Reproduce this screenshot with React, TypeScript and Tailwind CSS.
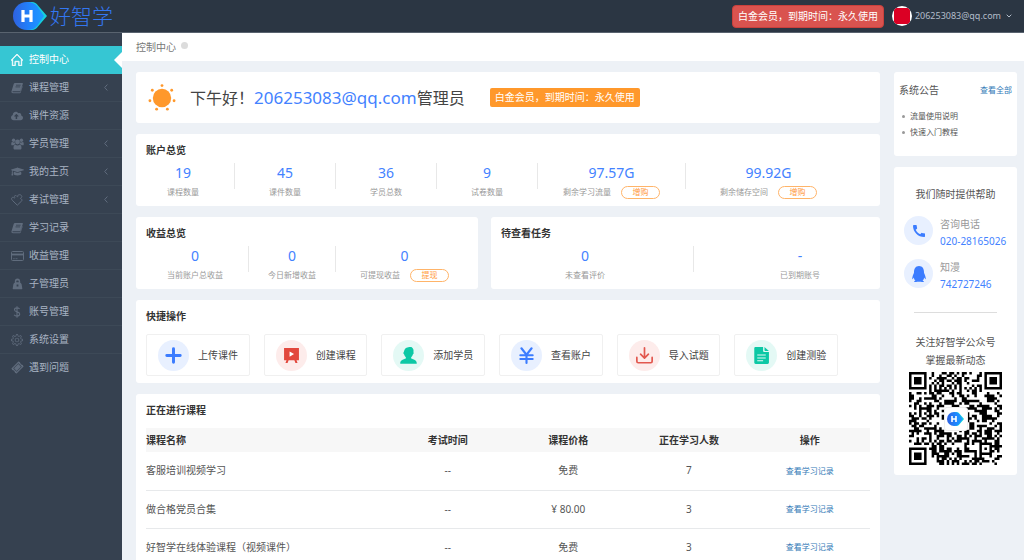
import React from 'react';
import { FaCloudUploadAlt, FaGraduationCap, FaTicketAlt, FaQq } from 'react-icons/fa';
import { SlHome, SlSettings } from 'react-icons/sl';
import { MdCall } from 'react-icons/md';

const BookIcon = () => (
  <svg width="12" height="12" viewBox="0 0 12 12" fill="currentColor">
    <path d="M4 1h7.2c.5 0 .8.4.6.9L9.6 8.600c-.1.400-.4.600-.8.600H2.200c-.6 0-.9.300-.7.700.1.300.4.400.8.400h6.900L11.300 4l.4.500-2 6c-.1.500-.5.800-1 .8H2C.9 11.300.2 10.300.5 9.300L2.700 2C2.900 1.400 3.400 1 4 1z" />
    <path d="M5 3.200h4.600M4.500 4.900h4.600" stroke="#364150" strokeWidth=".8" fill="none" />
  </svg>
);

const UsersIcon = () => (
  <svg width="13" height="12" viewBox="0 0 13 12" fill="currentColor">
    <circle cx="2.600" cy="2.300" r="1.700" />
    <circle cx="10.400" cy="2.300" r="1.700" />
    <circle cx="6.500" cy="4" r="2.400" />
    <path d="M.300 7V5.600c0-1 .3-1.500 1-1.500.5.400 1.700.6 2.500.2.100.9.400 1.500.9 2-.9 0-1.600.2-2.100.9H1.200C.700 7.200.300 7.200.300 7zM12.700 7V5.600c0-1-.3-1.500-1-1.500-.5.400-1.700.6-2.500.2-.1.900-.4 1.500-.9 2 .9 0 1.600.2 2.100.9h1.400c.5 0 .9 0 .9-.2z" />
    <path d="M2.500 10c0-2 .4-3.300 1.900-3.300.6.500 1.300.8 2.100.8s1.500-.3 2.100-.8c1.500 0 1.900 1.300 1.900 3.300 0 1-.6 1.500-1.500 1.500H4c-.9 0-1.500-.5-1.500-1.500z" />
  </svg>
);

const PuzzleIcon = () => (
  <svg width="12" height="12" viewBox="0 0 12 12" fill="none" stroke="currentColor" strokeLinejoin="round">
    <path d="M6.300 11.200L1.300 6.300C.300 5.300.400 4 1.200 3.500c.7-.4 1.300 0 1.900.5.500.3.900-.2.600-.7C3.200 2.500 3.300 1.900 4 1.600c.8-.3 1.500.2 2 .8.500.500 1 .200.900-.4C6.700 1 7.600.6 8.500.7c1.300 0 2 .7 2.300 1.600.2.800-.3 1.400-1 1.700-.6.200-.5.700.1.900 1.200.4 1.500 1.200.9 1.900z" />
  </svg>
);

const CardIcon = () => (
  <svg width="13" height="12" viewBox="0 0 13 12" fill="none" stroke="currentColor">
    <rect x=".5" y="1.500" width="12" height="9" rx="1" />
    <path d="M1 4.500h11" strokeWidth="1.800" />
    <path d="M2.200 8.700h1.500M4.500 8.700h2" strokeWidth=".8" />
  </svg>
);

const LockIcon = () => (
  <svg width="11" height="12" viewBox="0 0 11 12" fill="currentColor">
    <path d="M5.500.500c1.700 0 2.700 1.200 2.700 2.900v1.400c.9.300 1.300 1 1.500 2l.6 3.600c.1.500-.1.800-.6.800H1.300c-.5 0-.7-.3-.6-.8l.6-3.600c.2-1 .6-1.700 1.500-2V3.400C2.800 1.700 3.800.5 5.500.5z" />
    <path d="M4.300 4.300V3.500c0-.6.4-1 1.200-1s1.200.4 1.200 1v.8zM4.600 6.600h1.800v2H4.600z" fill="#364150" />
  </svg>
);

const DollarIcon = () => (
  <svg width="8" height="12" viewBox="0 0 8 12" fill="none" stroke="currentColor" strokeWidth="1.100">
    <path d="M4 .300v11.400M6.600 3C6 2.300 5.100 1.900 4 1.900c-1.500 0-2.500.7-2.500 1.900C1.500 6.600 6.700 5.200 6.700 8.100c0 1.300-1.100 2-2.700 2-1.200 0-2.200-.4-2.900-1.200" />
  </svg>
);

const menu = [
  { name: '控制中心', icon: <SlHome size={12} strokeWidth={40} />, active: true },
  { name: '课程管理', icon: <BookIcon />, sub: true },
  { name: '课件资源', icon: <FaCloudUploadAlt size={12} /> },
  { name: '学员管理', icon: <UsersIcon />, sub: true },
  { name: '我的主页', icon: <FaGraduationCap size={13} />, sub: true },
  { name: '考试管理', icon: <PuzzleIcon />, sub: true },
  { name: '学习记录', icon: <BookIcon /> },
  { name: '收益管理', icon: <CardIcon /> },
  { name: '子管理员', icon: <LockIcon /> },
  { name: '账号管理', icon: <DollarIcon /> },
  { name: '系统设置', icon: <SlSettings size={12} /> },
  { name: '遇到问题', icon: <FaTicketAlt size={11} className="-rotate-45" /> },
];

const courses = [
  { name: '客服培训视频学习', time: '--', price: '免费', count: 7 },
  { name: '做合格党员合集', time: '--', price: '¥ 80.00', count: 3 },
  { name: '好智学在线体验课程（视频课件）', time: '--', price: '免费', count: 3 },
];

const actions = [
  {
    name: '上传课件',
    color: 'bg-[#e8f0ff] text-[#3b7cff]',
    icon: <path d="M8 1.700v12.600M1.700 8h12.600" stroke="currentColor" strokeWidth="2.800" strokeLinecap="round" />,
  },
  {
    name: '创建课程',
    color: 'bg-[#fdeceb] text-[#e2483d]',
    icon: (
      <>
        <path d="M1 1h14v11.500h-2.300l1 2.500h-2l-1-2.500H5.300l-1 2.500h-2l1-2.500H1z" fill="currentColor" />
        <path d="M6.200 4.200l4.200 2.500-4.200 2.500z" fill="#fff" />
      </>
    ),
  },
  {
    name: '添加学员',
    color: 'bg-[#e4f9f5] text-[#0cc8a5]',
    icon: (
      <path
        d="M4 3.200C4.600.9 6.400.2 8.100.2c.8-.5 2.300-.6 3.200.2 1.300.9 1.700 2.700 1.300 4.500.5.300.3 1.500-.4 1.900-.4 1.200-.9 2.100-1.700 2.800v1.200c2.300.9 5 1.300 5.300 4.200.1.500-.2.700-.7.700H.900c-.5 0-.8-.2-.7-.7.400-2.900 3-3.300 5.300-4.200V9.600C4.700 8.900 4.200 8 3.800 6.800c-.7-.4-.9-1.600-.3-1.900z"
        fill="currentColor"
      />
    ),
  },
  {
    name: '查看账户',
    color: 'bg-[#e8f0ff] text-[#3b7cff]',
    icon: <path d="M3.200 1.200L8 7.300l4.800-6.100M8 7.300v7.700M2.200 7.800h11.600M2.200 11.300h11.600" stroke="currentColor" strokeWidth="2" strokeLinecap="round" fill="none" />,
  },
  {
    name: '导入试题',
    color: 'bg-[#fdeceb] text-[#e2574e]',
    icon: <path d="M8 .8v9.400M4.300 6.800L8 10.400l3.700-3.600M.8 9.800v3.700c0 .8.500 1.300 1.300 1.300h11.800c.8 0 1.300-.5 1.300-1.300V9.800" stroke="currentColor" strokeWidth="1.600" strokeLinecap="round" strokeLinejoin="round" fill="none" />,
  },
  {
    name: '创建测验',
    color: 'bg-[#e4f9f5] text-[#0cc8a5]',
    icon: (
      <>
        <path d="M2.500 0H9.500v3.500c0 .7.500 1.200 1.200 1.200H15v10c0 .8-.5 1.300-1.300 1.300H2.500c-.8 0-1.300-.5-1.300-1.300V1.300C1.200.5 1.700 0 2.500 0z" fill="currentColor" />
        <path d="M10.800 0L15 3.700h-3.400c-.5 0-.8-.3-.8-.8z" fill="currentColor" />
        <path d="M4 7.500h8M4 10.300h8M4 13h5.500" stroke="#e4f9f5" strokeWidth="1" />
      </>
    ),
  },
];

// builds a 37x37 code as one path
const QR_SIZE = 37;
const finder = (x: number, y: number) => {
  const d = Math.max(Math.abs(x - 3), Math.abs(y - 3));
  return d <= 1 || d === 3;
};
const isDark = (x: number, y: number) => {
  const far = QR_SIZE - 8;
  if (x < 8 && y < 8) return x < 7 && y < 7 && finder(x, y);
  if (x >= far && y < 8) return x > far && y < 7 && finder(x - far - 1, y);
  if (x < 8 && y >= far) return x < 7 && y > far && finder(x, y - far - 1);
  const a = Math.max(Math.abs(x - 30), Math.abs(y - 30));
  if (a <= 2) return a !== 1;
  if (x === 6 || y === 6) return (x + y) % 2 === 0;
  let h = (x * 374761393 + y * 668265263) | 0;
  h = Math.imul(h ^ (h >>> 13), 1274126177);
  return ((h ^ (h >>> 16)) & 255) < 128;
};
let qrPath = '';
for (let y = 0; y < QR_SIZE; y++) {
  for (let x = 0; x < QR_SIZE; x++) {
    if (isDark(x, y)) qrPath += `M${x} ${y}h1v1h-1z`;
  }
}

const LogoMark = ({ className }: { className: string }) => (
  <svg className={className} viewBox="0 0 34 28">
    <defs>
      <linearGradient id="mark" x1="0" x2="1">
        <stop offset="0" stopColor="#2f62e0" />
        <stop offset=".6" stopColor="#1f86ff" />
        <stop offset="1" stopColor="#1c9cff" />
      </linearGradient>
    </defs>
    <path d="M14 0h5c2.500 0 4.500 1.500 6 3.500L34 14l-9 10.500c-1.500 2-3.500 3.500-6 3.500h-5z" fill="#16cfdd" />
    <path d="M14 0c5 0 8 1.500 10.500 4.500L31 14l-6.500 9.500C22 26.500 19 28 14 28A14 14 0 0 1 14 0z" fill="url(#mark)" />
    <path d="M10 8v12M18 8v12M10 14h8" stroke="#fff" strokeWidth="3.200" fill="none" />
  </svg>
);

const Sun = () => (
  <svg width="28" height="28" viewBox="0 0 28 28" fill="#ff982b" className="shrink-0">
    <circle cx="14" cy="14" r="9.200" />
    {[0, 1, 2, 3, 4, 5, 6].map((i) => {
      const a = (i * 2 * Math.PI) / 7;
      return <circle key={i} cx={14 + 12.400 * Math.sin(a)} cy={14 - 12.400 * Math.cos(a)} r="1.400" />;
    })}
  </svg>
);

const Card = ({ title, className = '', children }) => (
  <section className={`rounded-[3px] bg-white px-[10px] pt-2 ${className}`}>
    <h2 className="text-[10px] leading-4 font-bold text-[#333]">{title}</h2>
    {children}
  </section>
);

const Stat = ({ value, label, button = '', className = '' }) => (
  <div className={`text-center ${className}`}>
    <div className="text-[14px] leading-5 text-[#4382ff]">{value}</div>
    <div className="mt-[2px] flex h-[14px] items-center justify-center gap-[10px] text-[8px] whitespace-nowrap text-[#999]">
      {label}
      {button && (
        <button className="flex h-[13px] w-[39px] items-center justify-center rounded-full border border-[#ffb469] text-[#ff9a3c]">
          {button}
        </button>
      )}
    </div>
  </div>
);

const Divider = () => <span className="h-[26px] w-px shrink-0 bg-[#e8e8e8]" />;

const App = () => {
  return (
    <div className="flex h-screen flex-col overflow-hidden bg-[#edf1f6] font-['Noto_Sans','Noto_Sans_CJK_SC',sans-serif] text-[10px] text-[#555]">
      <header className="flex h-[33px] shrink-0 items-center border-b border-[#59636f] bg-[#2b3643] pr-3">
        <a href="#" className="flex items-center pl-[13px]">
          <LogoMark className="h-[28px] w-[34px]" />
          <span className="ml-[3px] text-[21px] leading-7 font-light text-[#3377f2]">好智学</span>
        </a>
        <button className="ml-auto h-[23px] rounded-[4px] border border-[#c9403c] bg-[#d9534f] px-[5px] text-white">
          白金会员，到期时间：永久使用
        </button>
        <button className="ml-2 flex items-center text-[9px] text-[#b3bdca]">
          <span className="flex size-5 items-center justify-center overflow-hidden rounded-full bg-white">
            <span className="h-4 w-4 bg-[#db0024]" />
          </span>
          <span className="ml-[3px]">206253083@qq.com</span>
          <svg width="6" height="4" viewBox="0 0 6 4" className="ml-[5px]">
            <path d="M.7.700L3 3 5.300.700" stroke="currentColor" fill="none" />
          </svg>
        </button>
      </header>

      <div className="flex min-h-0 flex-1">
        <nav className="w-[122px] shrink-0 bg-[#364150] pt-[13px]">
          {menu.map((item) => (
            <a
              key={item.name}
              href="#"
              className={`relative flex h-7 items-center border-b pr-[14px] pl-[10px] last:border-transparent ${
                item.active ? 'border-[#36c6d3] bg-[#36c6d3] text-white' : 'border-[#3d4957] text-[#a9b4c4]'
              }`}
            >
              <span className={`flex w-[14px] justify-center ${item.active ? '' : 'text-[#606c7d]'}`}>{item.icon}</span>
              <span className="ml-[5px]">{item.name}</span>
              {item.sub && (
                <svg width="4" height="7" viewBox="0 0 4 7" className="ml-auto text-[#606c7d]">
                  <path d="M3.400.500L.700 3.500l2.700 3" stroke="currentColor" fill="none" />
                </svg>
              )}
              {item.active && (
                <svg width="8" height="16" viewBox="0 0 8 16" className="absolute top-[6px] right-0">
                  <path d="M8 0v16L0 8z" fill="#fff" />
                </svg>
              )}
            </a>
          ))}
        </nav>

        <main className="min-w-0 flex-1">
          <div className="flex h-7 items-center bg-white pl-[14px] text-[#777]">
            控制中心
            <span className="mb-[3px] ml-[5px] size-[7px] rounded-full bg-[#dcdcdc]" />
          </div>

          <div className="flex items-start gap-[14px] pt-[11px] pr-[7px] pl-[14px]">
            <div className="flex min-w-0 flex-1 flex-col gap-[11px]">
              <section className="flex h-[51px] items-center rounded-[3px] bg-white pl-3">
                <Sun />
                <h1 className="ml-[14px] text-[16px] text-[#444]">
                  下午好！<span className="text-[17px] text-[#4382ff]">206253083@qq.com</span>管理员
                </h1>
                <span className="ml-[25px] rounded-[2px] bg-[#ff982b] px-[5px] leading-[19px] text-white">
                  白金会员，到期时间：永久使用
                </span>
              </section>

              <Card title="账户总览" className="pb-[7px]">
                <div className="mt-[5px] flex">
                  <Stat value="19" label="课程数量" className="pr-[35px] pl-[21px]" />
                  <Divider />
                  <Stat value="45" label="课件数量" className="px-[34px]" />
                  <Divider />
                  <Stat value="36" label="学员总数" className="px-[34px]" />
                  <Divider />
                  <Stat value="9" label="试卷数量" className="px-[34px]" />
                  <Divider />
                  <Stat value="97.57G" label="剩余学习流量" button="增购" className="px-[25px]" />
                  <Divider />
                  <Stat value="99.92G" label="剩余储存空间" button="增购" className="pl-[34px]" />
                </div>
              </Card>

              <div className="grid grid-cols-[342fr_389fr] gap-[13px]">
                <Card title="收益总览" className="pb-[7px]">
                  <div className="mt-[5px] flex">
                    <Stat value="0" label="当前账户总收益" className="pr-[25px] pl-[21px]" />
                    <Divider />
                    <Stat value="0" label="今日新增收益" className="px-[19px]" />
                    <Divider />
                    <Stat value="0" label="可提现收益" button="提现" className="pl-6" />
                  </div>
                </Card>
                <Card title="待查看任务" className="pb-[7px]">
                  <div className="mt-[5px] flex">
                    <Stat value="0" label="未查看评价" className="w-[52%] pr-6" />
                    <Divider />
                    <Stat value="-" label="已到期账号" className="flex-1 pl-9" />
                  </div>
                </Card>
              </div>

              <Card title="快捷操作" className="pb-[7px]">
                <div className="mt-[10px] mr-8 grid grid-cols-6 gap-[14px]">
                  {actions.map((a) => (
                    <button key={a.name} className="flex h-[42px] items-center rounded-[2px] border border-[#f0f0f0] pl-[11px] text-[#444]">
                      <span className={`flex size-[31px] shrink-0 items-center justify-center rounded-full ${a.color}`}>
                        <svg width="17" height="17" viewBox="0 0 16 16">{a.icon}</svg>
                      </span>
                      <span className="ml-[9px] whitespace-nowrap">{a.name}</span>
                    </button>
                  ))}
                </div>
              </Card>

              <Card title="正在进行课程" className="pb-4">
                <table className="mt-[10px] w-full table-fixed text-center">
                  <thead>
                    <tr className="h-6 bg-[#f7f7f7] text-[#333]">
                      <th className="w-1/3 text-left">课程名称</th>
                      <th>考试时间</th>
                      <th>课程价格</th>
                      <th>正在学习人数</th>
                      <th>操作</th>
                    </tr>
                  </thead>
                  <tbody>
                    {courses.map((c) => (
                      <tr key={c.name} className="h-[38px] border-b border-[#e7e9eb]">
                        <td className="text-left">{c.name}</td>
                        <td>{c.time}</td>
                        <td>{c.price}</td>
                        <td>{c.count}</td>
                        <td className="text-[8px]">
                          <a href="#" className="text-[#337ab7]">查看学习记录</a>
                        </td>
                      </tr>
                    ))}
                  </tbody>
                </table>
              </Card>
            </div>

            <aside className="flex w-[123px] shrink-0 flex-col gap-[11px]">
              <section className="rounded-[3px] bg-white px-[5px] pt-[10px] pb-4">
                <div className="flex items-center justify-between leading-4">
                  <h2>系统公告</h2>
                  <a href="#" className="text-[8px] text-[#337ab7]">查看全部</a>
                </div>
                <ul className="mt-[10px] text-[8px] leading-4">
                  {['流量使用说明', '快速入门教程'].map((t) => (
                    <li key={t} className="flex items-center pl-[3px]">
                      <span className="mr-[5px] size-[3px] rounded-full bg-[#999]" />
                      {t}
                    </li>
                  ))}
                </ul>
              </section>

              <section className="rounded-[3px] bg-white pt-[19px] pb-[10px]">
                <h2 className="text-center leading-4">我们随时提供帮助</h2>
                <div className="mt-[14px] flex gap-[7px] pl-[10px]">
                  <span className="flex size-[29px] items-center justify-center rounded-full bg-[#e8f0ff] text-[#3b7cff]">
                    <MdCall size={16} />
                  </span>
                  <div className="leading-[17px]">
                    <p className="text-[#999]">咨询电话</p>
                    <p className="text-[#4382ff]">020-28165026</p>
                  </div>
                </div>
                <div className="mt-[9px] flex gap-[7px] pl-[10px]">
                  <span className="flex size-[29px] items-center justify-center rounded-full bg-[#e8f0ff] text-[#3b7cff]">
                    <FaQq size={16} />
                  </span>
                  <div className="leading-[17px]">
                    <p className="text-[#999]">知漫</p>
                    <p className="text-[#4382ff]">742727246</p>
                  </div>
                </div>
                <hr className="mx-5 mt-[19px] border-[#ddd]" />
                <p className="mt-5 text-center leading-[18px]">
                  关注好智学公众号
                  <br />
                  掌握最新动态
                </p>
                <div className="relative mx-auto mt-[3px] size-[93px]">
                  <svg viewBox="0 0 37 37" className="size-full text-black">
                    <path d={qrPath} fill="currentColor" />
                  </svg>
                  <span className="absolute inset-0 m-auto flex size-6 items-center justify-center rounded-[3px] border border-[#eee] bg-white">
                    <LogoMark className="h-[14px] w-[17px]" />
                  </span>
                </div>
              </section>
            </aside>
          </div>
        </main>
      </div>
    </div>
  );
};

export default App;
